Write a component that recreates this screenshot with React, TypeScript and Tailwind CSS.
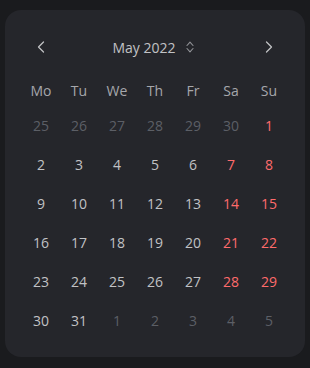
import React from 'react';
import { ChevronLeft, ChevronRight } from 'lucide-react';

type Day = { n: number; outside: boolean; weekend: boolean };

const WEEKDAYS = ['Mo', 'Tu', 'We', 'Th', 'Fr', 'Sa', 'Su'];

const buildMonth = (): Day[] => {
  const days: Day[] = [];
  const lead = [25, 26, 27, 28, 29, 30];
  lead.forEach((n) => days.push({ n, outside: true, weekend: false }));
  for (let n = 1; n <= 31; n++) days.push({ n, outside: false, weekend: false });
  for (let n = 1; n <= 5; n++) days.push({ n, outside: true, weekend: false });
  return days.map((d, i) => ({ ...d, weekend: !d.outside && i % 7 >= 5 }));
};

const SortIcon = () => (
  <svg width="8" height="14" viewBox="0 0 8 14" fill="none" stroke="#909296" strokeWidth="1.1" strokeLinecap="round" strokeLinejoin="round">
    <polyline points="1,5.5 4,2.2 7,5.5" />
    <polyline points="1,8.5 4,11.8 7,8.5" />
  </svg>
);

const App: React.FC = () => {
  const days = buildMonth();

  return (
    <div className="w-[310px] h-[368px] bg-[#1a1b1e] pt-[10px] px-[5px]" style={{ fontFamily: '"Open Sans", "Noto Sans", sans-serif' }}>
      <div className="w-[300px] h-[347px] bg-[#25262b] rounded-[16px] px-[17px] pt-[19px]">
        <div className="h-[36px] flex items-center justify-between text-[#c1c2c5]">
          <button className="w-[38px] h-[36px] flex items-center justify-center">
            <ChevronLeft size={20} strokeWidth={1.5} />
          </button>
          <div className="flex items-center gap-[10px] text-[14px] pr-[4px]">
            <span>May 2022</span>
            <SortIcon />
          </div>
          <button className="w-[38px] h-[36px] flex items-center justify-center">
            <ChevronRight size={20} strokeWidth={1.5} />
          </button>
        </div>

        <div className="mt-[9px] h-[32px] grid grid-cols-7 text-[14px] text-[#a6a7ab]">
          {WEEKDAYS.map((w) => (
            <div key={w} className="flex items-center justify-center">{w}</div>
          ))}
        </div>

        <div className="grid grid-cols-7 text-[14px]">
          {days.map((d, i) => (
            <div
              key={i}
              className={`h-[39px] flex items-center justify-center ${
                d.outside ? 'text-[#5c5f66]' : d.weekend ? 'text-[#ff6b6b]' : 'text-[#c1c2c5]'
              }`}
            >
              {d.n}
            </div>
          ))}
        </div>
      </div>
    </div>
  );
};

export default App;
